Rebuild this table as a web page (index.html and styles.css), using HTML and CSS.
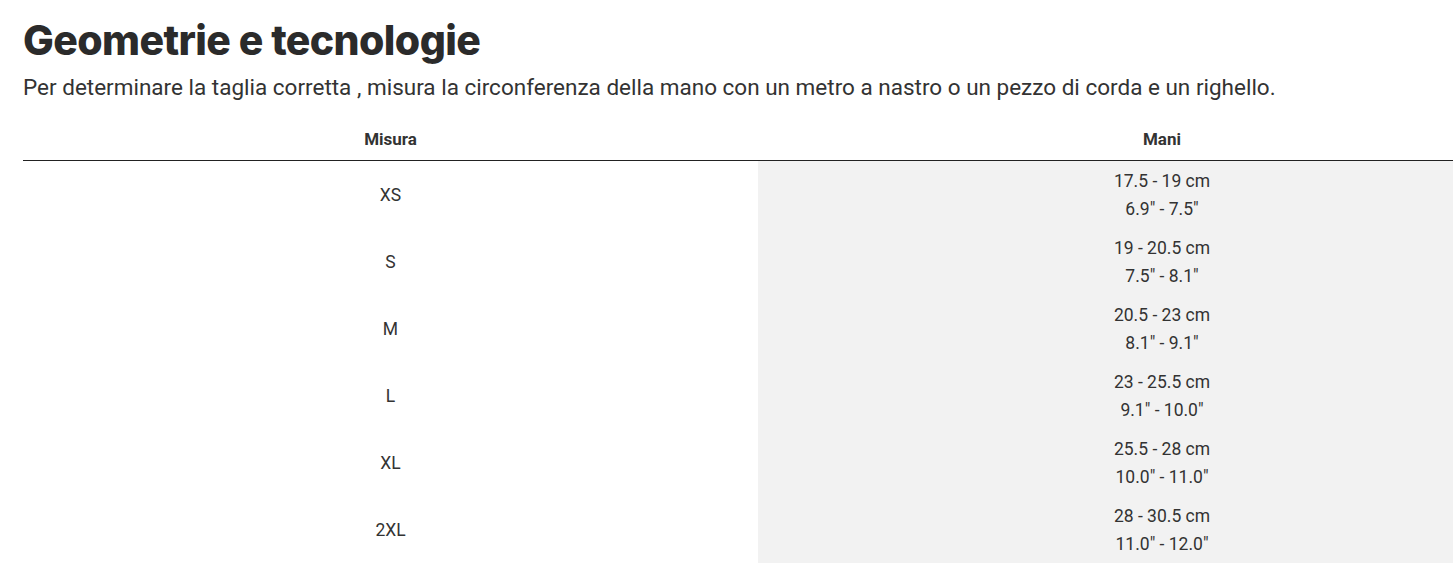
FILE: index.html
```html
<!DOCTYPE html>
<html lang="it">
<head>
    <meta charset="UTF-8">
    <meta name="viewport" content="width=device-width, initial-scale=1.0">
    <title>Geometrie e tecnologie</title>
    <link rel="stylesheet" href="styles.css">
</head>
<body>

<div class="size-guide">
    <h2>Geometrie e tecnologie</h2>
    <p class="intro">Per determinare la taglia corretta , misura la circonferenza della mano con un metro a nastro o un pezzo di corda e un righello.</p>

    <table class="size-table">
        <thead>
            <tr>
                <th class="col-size">Misura</th>
                <th class="col-hand">Mani</th>
            </tr>
        </thead>
        <tbody>
            <tr>
                <td>XS</td>
                <td class="shaded">17.5 - 19 cm<br>6.9" - 7.5"</td>
            </tr>
            <tr>
                <td>S</td>
                <td class="shaded">19 - 20.5 cm<br>7.5" - 8.1"</td>
            </tr>
            <tr>
                <td>M</td>
                <td class="shaded">20.5 - 23 cm<br>8.1" - 9.1"</td>
            </tr>
            <tr>
                <td>L</td>
                <td class="shaded">23 - 25.5 cm<br>9.1" - 10.0"</td>
            </tr>
            <tr>
                <td>XL</td>
                <td class="shaded">25.5 - 28 cm<br>10.0" - 11.0"</td>
            </tr>
            <tr>
                <td>2XL</td>
                <td class="shaded">28 - 30.5 cm<br>11.0" - 12.0"</td>
            </tr>
        </tbody>
    </table>
</div>

</body>
</html>
```

FILE: styles.css
```css
body {
    font-family: 'Roboto', 'Liberation Sans', sans-serif;
    background-color: #fff;
    color: #333;
    margin: 0;
    overflow: hidden;
}

.size-guide {
    padding: 16px 0 0 23px;
}

.size-guide h2 {
    font-family: 'Inter', 'Liberation Sans', sans-serif;
    font-size: 41px;
    font-weight: 800;
    letter-spacing: -0.6px;
    line-height: 48px;
    color: #2b2b2b;
    margin: 0;
}

.intro {
    font-size: 22.5px;
    line-height: 30px;
    margin: 8px 0 0;
    color: #333;
}

.size-table {
    border-collapse: collapse;
    width: 1543px;
    margin-top: 16px;
    font-size: 17.5px;
    color: #333;
}

.size-table th {
    font-size: 17px;
    font-weight: 700;
    height: 42px;
    padding: 0;
    text-align: center;
    border-bottom: 1px solid #222;
}

.col-size {
    width: 735px;
}

.size-table td {
    text-align: center;
    height: 67px;
    padding: 0;
    line-height: 28px;
}

.size-table td.shaded {
    background-color: #f2f2f2;
}
```
